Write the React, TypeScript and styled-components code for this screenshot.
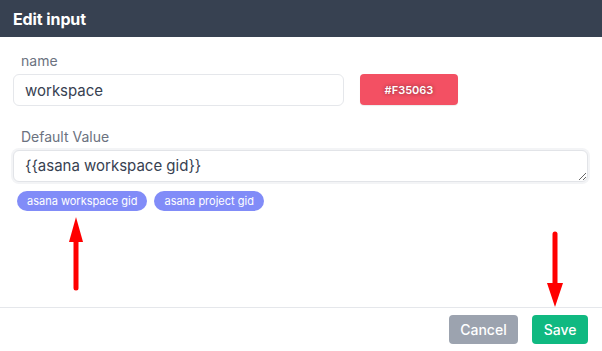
import React from 'react';
import styled, { createGlobalStyle } from 'styled-components';

const GlobalStyle = createGlobalStyle`
  html, body {
    margin: 0;
    padding: 0;
    background: #ffffff;
  }
  body {
    font-family: Inter, "Noto Sans", "Liberation Sans", sans-serif;
  }
`;

const Modal = styled.div`
  position: relative;
  width: 602px;
  height: 351px;
  display: flex;
  flex-direction: column;
  background: #ffffff;
  overflow: hidden;
`;

const Header = styled.div`
  height: 37px;
  display: flex;
  align-items: center;
  padding: 0 13px;
  background: #374151;
  color: #ffffff;
  font-size: 16px;
  font-weight: 700;
  letter-spacing: -0.1px;
`;

const Body = styled.div`
  height: 270px;
  padding: 14px 14px 0 13px;
  box-sizing: border-box;
  display: flex;
  flex-direction: column;
`;

const Label = styled.div`
  padding-left: 8px;
  font-size: 14px;
  line-height: 20px;
  color: #6b7280;
  margin-bottom: 3px;
`;

const Row = styled.div`
  display: flex;
  align-items: flex-start;
  gap: 16px;
`;

const Field = styled.div`
  display: flex;
  flex-direction: column;
`;

const TextInput = styled.input`
  width: 331px;
  height: 32px;
  box-sizing: border-box;
  border: 1px solid #e5e7eb;
  border-radius: 6px;
  padding: 0 11px;
  font-family: inherit;
  font-size: 15px;
  color: #374151;
  outline: none;
`;

const ColorButton = styled.button<{ $color: string }>`
  margin-top: 23px;
  width: 98px;
  height: 31px;
  border: none;
  border-radius: 4px;
  background: ${p => p.$color};
  color: #ffffff;
  font-family: inherit;
  font-size: 11px;
  font-weight: 600;
  text-shadow: 0 0 4px rgba(0, 0, 0, 0.45);
  box-shadow: 0 1px 1px rgba(0, 0, 0, 0.08);
`;

const Spacer = styled.div<{ $h: number }>`
  height: ${p => p.$h}px;
`;

const TextArea = styled.textarea`
  display: block;
  width: 575px;
  height: 32px;
  box-sizing: border-box;
  border: 1px solid #e2e4e8;
  border-radius: 6px;
  box-shadow: 0 0 0 2px #f3f4f6;
  padding: 5px 11px;
  font-family: inherit;
  font-size: 15px;
  line-height: 20px;
  color: #374151;
  outline: none;
  resize: both;
  overflow: hidden;
`;

const Chips = styled.div`
  display: flex;
  gap: 7px;
  margin-top: 9px;
  padding-left: 4px;
`;

const Chip = styled.span`
  height: 20px;
  display: inline-flex;
  align-items: center;
  padding: 0 10px;
  border-radius: 10px;
  background: #818cf8;
  color: #ffffff;
  font-size: 11px;
  font-weight: 400;
`;

const Footer = styled.div`
  border-top: 1px solid #e5e7eb;
  display: flex;
  justify-content: flex-end;
  gap: 14px;
  padding: 7px 14px 0 0;
`;

const Button = styled.button<{ $bg: string }>`
  height: 29px;
  padding: 0 11.5px;
  border: none;
  border-radius: 4px;
  background: ${p => p.$bg};
  color: #ffffff;
  font-family: inherit;
  font-size: 14px;
  font-weight: 500;
`;

const Arrow = styled.svg`
  position: absolute;
  overflow: visible;
`;

const UpArrow = () => (
  <Arrow width="16" height="74" viewBox="0 0 16 74" style={{ left: 68, top: 217 }}>
    <path d="M8 0 L15 25 L1 25 Z" fill="#ff0000" />
    <line x1="8" y1="22" x2="8" y2="71" stroke="#ff0000" strokeWidth="5" strokeLinecap="round" />
  </Arrow>
);

const DownArrow = () => (
  <Arrow width="16" height="76" viewBox="0 0 16 76" style={{ left: 547, top: 232 }}>
    <line x1="8" y1="2" x2="8" y2="54" stroke="#ff0000" strokeWidth="5" strokeLinecap="round" />
    <path d="M0 51 L16 51 L8 75 Z" fill="#ff0000" />
  </Arrow>
);

export default function App() {
  return (
    <>
      <GlobalStyle />
      <Modal>
        <Header>Edit input</Header>
        <Body>
          <Row>
            <Field>
              <Label>name</Label>
              <TextInput defaultValue="workspace" />
            </Field>
            <ColorButton $color="#F35063">#F35063</ColorButton>
          </Row>
          <Spacer $h={21} />
          <Label>Default Value</Label>
          <TextArea defaultValue="{{asana workspace gid}}" rows={1} />
          <Chips>
            <Chip>asana workspace gid</Chip>
            <Chip>asana project gid</Chip>
          </Chips>
        </Body>
        <Footer>
          <Button $bg="#9ca3af">Cancel</Button>
          <Button $bg="#10b981">Save</Button>
        </Footer>
        <UpArrow />
        <DownArrow />
      </Modal>
    </>
  );
}
